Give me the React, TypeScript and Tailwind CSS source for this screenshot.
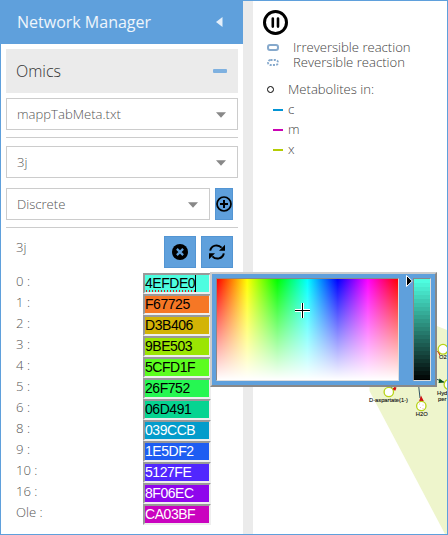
import React from "react";

type Swatch = { label: string; hex: string; dark?: boolean };

const swatches: Swatch[] = [
  { label: "0 :", hex: "4EFDE0" },
  { label: "1 :", hex: "F67725" },
  { label: "2 :", hex: "D3B406" },
  { label: "3 :", hex: "9BE503" },
  { label: "4 :", hex: "5CFD1F" },
  { label: "5 :", hex: "26F752" },
  { label: "6 :", hex: "06D491" },
  { label: "8 :", hex: "039CCB", dark: true },
  { label: "9 :", hex: "1E5DF2", dark: true },
  { label: "10 :", hex: "5127FE", dark: true },
  { label: "16 :", hex: "8F06EC", dark: true },
  { label: "Ole :", hex: "CA03BF", dark: true },
];

function Select({ value, className }: { value: string; className: string }) {
  return (
    <div className={`flex h-8 items-center justify-between border border-[#ccc] pr-[11px] pl-[10px] ${className}`}>
      <span className="text-[13.1px] leading-[30px] text-[#555]">{value}</span>
      <svg width="10" height="6" viewBox="0 0 10 6" className="mt-px">
        <path d="M0 .3h10L5 5.7z" fill="#888" />
      </svg>
    </div>
  );
}

function SwatchRow({ label, hex, dark, active }: Swatch & { active: boolean }) {
  return (
    <div className="flex h-[21px] justify-between pr-8 pl-[15px]">
      <span className="text-[13.1px] leading-[17px] text-[#555]">{label}</span>
      <div
        className={`flex h-[21px] w-[68px] border-2 border-t-[#999] border-r-[#eee] border-b-[#eee] border-l-[#999] font-['Liberation_Sans',sans-serif] text-[14px] leading-[17px] font-normal tracking-[-0.45px] ${dark ? "text-white" : "text-black"}`}
        style={{ backgroundColor: `#${hex}` }}
      >
        <span className={active ? "h-[17px] border-r border-black bg-[radial-gradient(circle,#d22_0.8px,transparent_1px)] bg-[length:3px_2px] bg-[position:0_15px] bg-repeat-x" : ""}>
          {hex}
        </span>
      </div>
    </div>
  );
}

function Sidebar() {
  return (
    <aside className="w-[243px] shrink-0 border-l border-[#5fa0dc] bg-white">
      <header className="-ml-px flex h-11 items-center justify-between bg-[#5fa0dc] pr-5 pl-[17px]">
        <h1 className="text-[16px] font-normal text-white/90">Network Manager</h1>
        <svg width="7" height="10" viewBox="0 0 7 10">
          <path d="M6.5 0v10L0 5z" fill="#e4effa" />
        </svg>
      </header>
      <div className="mt-[5px] mr-[5px] ml-[5px] flex h-11 items-center justify-between bg-[#ebebeb] pr-[11px] pl-[10px]">
        <h2 className="text-[16px] text-[#333]">Omics</h2>
        <div className="h-1 w-[14px] rounded-[1px] bg-[#7fb1e0]" />
      </div>
      <Select value="mappTabMeta.txt" className="mx-[5px] mt-[5px]" />
      <div className="mx-[5px] mt-[7px] h-px bg-[#ccc]" />
      <Select value="3j" className="mx-[5px] mt-2" />
      <div className="mt-[10px] flex gap-[5px] px-[5px]">
        <Select value="Discrete" className="w-[204px]" />
        <button className="flex h-8 w-[18px] items-center justify-center border border-[#5395d3] bg-[#5fa0dc]">
          <svg width="16" height="16" viewBox="0 0 16 16" className="shrink-0" fill="none" stroke="#000">
            <circle cx="8" cy="8" r="7" strokeWidth="1.7" />
            <path d="M8 4v8M4 8h8" strokeWidth="2" />
          </svg>
        </button>
      </div>
      <div className="mx-[5px] mt-[7px] h-px bg-[#ccc]" />
      <div className="mt-2 flex h-8 gap-[5px] pl-[15px]">
        <span className="w-[143px] text-[13.1px] leading-[23px] text-[#555]">3j</span>
        <button className="flex size-8 items-center justify-center border border-[#5395d3] bg-[#5fa0dc]">
          <svg width="16" height="16" viewBox="0 0 16 16">
            <circle cx="8" cy="8" r="8" fill="#000" />
            <path d="m4.9 4.9 6.2 6.2m0-6.2-6.2 6.2" stroke="#5fa0dc" strokeWidth="2.2" />
          </svg>
        </button>
        <button className="flex size-8 items-center justify-center border border-[#5395d3] bg-[#5fa0dc]">
          <svg width="16" height="16" viewBox="0 0 16 16" fill="none" stroke="#000" strokeWidth="2">
            <path d="M1.2 6.6C2.4 1 9-.1 12.6 3.6M14.8 9.4C13.6 15 7 16.1 3.4 12.4" />
            <path d="M16 .7v6h-6zM0 15.3v-6h6z" fill="#000" stroke="none" />
          </svg>
        </button>
      </div>
      <div className="mt-[5px]">
        {swatches.map((s, i) => (
          <SwatchRow key={s.hex} {...s} active={i === 0} />
        ))}
      </div>
    </aside>
  );
}

function Legend() {
  return (
    <div className="pt-[9px] pl-[10px] text-[13.1px] text-[#444]">
      <svg width="25" height="25" viewBox="0 0 25 25">
        <circle cx="12.5" cy="12.5" r="11" fill="none" stroke="#000" strokeWidth="3" />
        <path d="M9.8 8.6v8M15 8.6v8" stroke="#000" strokeWidth="2.6" strokeLinecap="round" />
      </svg>
      <div className="mt-[5px] flex h-[15px] items-center pl-1">
        <span className="h-[7px] w-3 rounded-[3px] border-2 border-[#86a9cc]" />
        <span className="ml-[14px] leading-[15px]">Irreversible reaction</span>
      </div>
      <div className="flex h-[15px] items-center pl-1">
        <svg width="12" height="7" viewBox="0 0 12 7">
          <rect x="1" y="1" width="10" height="5" rx="2.5" fill="none" stroke="#86a9cc" strokeWidth="1.8" strokeDasharray="2 1.3" />
        </svg>
        <span className="ml-[14px] leading-[15px]">Reversible reaction</span>
      </div>
      <div className="mt-[10px] flex h-5 items-center pl-1">
        <span className="mt-[-2px] size-[7px] rounded-full border border-black" />
        <span className="ml-[14px]">Metabolites in:</span>
      </div>
      <LegendItem name="c" color="bg-[#0394d4]" />
      <LegendItem name="m" color="bg-[#ca03b4]" />
      <LegendItem name="x" color="bg-[#b4cc04]" />
    </div>
  );
}

function LegendItem({ name, color }: { name: string; color: string }) {
  return (
    <div className="flex h-5 items-center pl-[10px]">
      <span className={`h-[2px] w-[10px] ${color}`} />
      <span className="ml-[5px]">{name}</span>
    </div>
  );
}

function NetworkGraph() {
  return (
    <svg className="absolute inset-0" width="448" height="535" viewBox="0 0 448 535">
      <path d="M369.5 387V391L445 534H447V330L437 326L400 340Z" fill="#eef5cc" />
      <path d="M418 380l2 18M436 379l8 3M390 388l6-3" stroke="#356" strokeWidth="1" />
      <path d="M421 395.5l3 6h-5z M391 390l3.5-3 2 .5-1 3z M437 351h3v5z" fill="#d01010" />
      <path d="M438.5 383l1-4.5 5 4z" fill="#064d14" />
      <g fill="#fff" stroke="#b7d217" strokeWidth="1.3">
        <circle cx="388.8" cy="392" r="4.7" />
        <circle cx="421.3" cy="406" r="4.7" />
        <circle cx="443" cy="349.3" r="4.9" />
        <circle cx="449" cy="384.5" r="4.9" />
      </g>
      <g fill="#e5a0a0">
        <circle cx="419.5" cy="404" r=".5" />
        <circle cx="423" cy="405" r=".5" />
        <circle cx="420.5" cy="407.5" r=".5" />
        <circle cx="423" cy="408.5" r=".5" />
      </g>
      <g fill="#111" stroke="#111" strokeWidth=".12" className="font-['Liberation_Sans',sans-serif] text-[5.8px] font-normal">
        <text x="369" y="402.3" textLength="39" lengthAdjust="spacingAndGlyphs">D-aspartate(1-)</text>
        <text x="415.8" y="416">H2O</text>
        <text x="439" y="359">O2</text>
        <text x="437" y="395">Hyd</text>
        <text x="438" y="401.3">per</text>
      </g>
      <path d="M447.5 0v535" stroke="#5fa0dc" />
    </svg>
  );
}

function ColorPicker() {
  return (
    <div className="absolute top-[272px] left-[210px] flex h-[115px] w-[227px] border-2 border-t-[#ccc] border-r-[#888] border-b-[#888] border-l-[#ccc] bg-[#5fa0dc] pt-1 pl-1">
      <div className="h-[103px] w-[183px] border border-t-[#888] border-r-[#ddd] border-b-[#ddd] border-l-[#888] bg-[linear-gradient(to_bottom,rgba(255,255,255,0),#fff),linear-gradient(to_right,#f00,#ff0,#0f0,#0ff,#00f,#f0f,#f00)]" />
      <div className="ml-[14px] h-[103px] w-[18px] border border-t-[#888] border-r-[#ddd] border-b-[#ddd] border-l-[#888] bg-[#000]">
        {Array.from({ length: 25 }, (_, i) => (
          <div
            key={i}
            className="h-1"
            style={{ backgroundColor: `rgb(${78 * (1 - i / 25)} ${253 * (1 - i / 25)} ${224 * (1 - i / 25)})` }}
          />
        ))}
      </div>
      <svg className="absolute top-[28px] left-[82px]" width="17" height="17" viewBox="0 0 17 17">
        <path d="M8.5 1v15M1 8.5h15" stroke="#fff" strokeWidth="3" />
        <path d="M8.5 1v15M1 8.5h15" stroke="#000" />
      </svg>
      <svg className="absolute top-[1px] left-[194px]" width="7" height="12" viewBox="0 0 7 12">
        <path d="M.5.5v11L6.3 6z" fill="#000" stroke="#fff" />
      </svg>
    </div>
  );
}

export default function App() {
  return (
    <div className="relative flex h-[535px] w-[448px] overflow-hidden bg-white font-['Open_Sans',sans-serif] font-light">
      <Sidebar />
      <main className="flex flex-1 border-t border-[#5fa0dc]">
        <div className="w-[10px] bg-[#ebebeb]" />
        <Legend />
      </main>
      <NetworkGraph />
      <ColorPicker />
      <div className="absolute bottom-0 left-0 h-px w-full bg-[#5fa0dc]" />
    </div>
  );
}
